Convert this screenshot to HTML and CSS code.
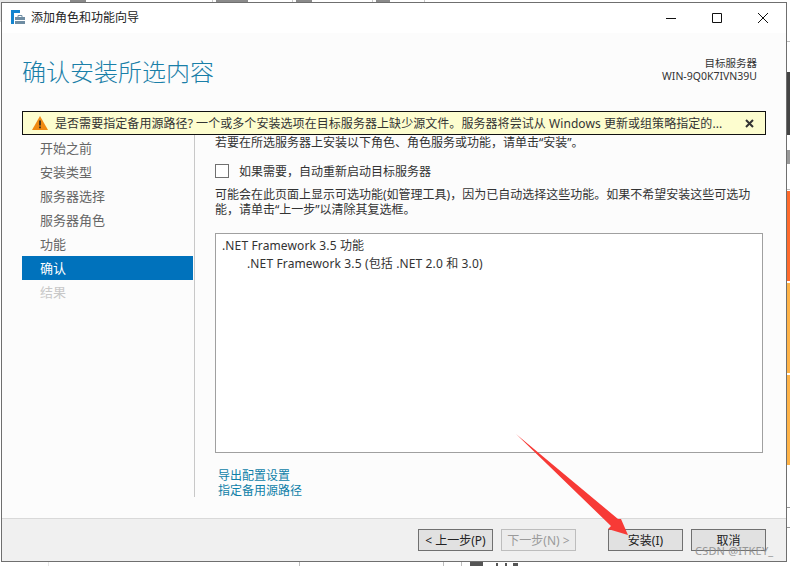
FILE: index.html
```html
<!DOCTYPE html>
<html lang="zh-CN">
<head>
<meta charset="utf-8">
<title>添加角色和功能向导</title>
<link rel="stylesheet" href="styles.css">
</head>
<body>
<svg class="desktop" width="790" height="566" viewBox="0 0 790 566">
  <path fill="#e6e6e6" d="M0 0h30v2H2v20H0z"/>
  <path fill="#c9c9c9" d="M212 0h1v2h-1zM292 0h1v2h-1zM372 0h1v2h-1zM424 0h1v2h-1z"/>
  <path fill="#8a8a8a" d="M70 0h16v2H70zM216 0h32v2h-32zM296 0h16v2h-16zM376 0h14v2h-14z"/>
  <path fill="#bdbdbd" d="M787 41h3v1h-3zM787 189h3v1h-3z"/>
  <path fill="#444" d="M787 72h3v63h-3z"/>
  <path fill="#999" d="M787 150h3v14h-3zM787 507h3v1h-3zM787 527h3v1h-3z"/>
  <path fill="#ff6a2b" d="M787 191h3v90h-3z"/>
  <path fill="#ffb347" d="M787 283h3v90h-3zM787 375h3v90h-3z"/>
  <path fill="#e6e6e6" d="M48 562h1v4h-1z"/>
  <path fill="#bdbdbd" d="M299 562h1v4h-1zM443 562h1v4h-1zM461 562h1v4h-1z"/>
  <path fill="#555" d="M470 562h13v4h-13zM496 563h2v3h-2zM505 563h2v3h-2zM513 563h5v3h-5z"/>
</svg>
<div class="window">
  <div class="titlebar">
    <svg class="appicon" width="14" height="14" viewBox="0 0 14 14"><path fill="#1384cf" d="M0 0h9v3H3v11H0z"/><path fill="#6f8da3" d="M4 7h10v7H4z"/><path fill="none" stroke="#6f8da3" d="M7 7V5.5h4V7"/><path fill="#fff" d="M4 10h10v1H4z"/></svg>
    <span class="title">添加角色和功能向导</span>
    <div class="winbtns">
      <svg width="12" height="12" viewBox="0 0 12 12"><path d="M1 6.5h10" stroke="#111" fill="none"/></svg>
      <svg width="12" height="12" viewBox="0 0 12 12"><path d="M1.5 1.5h9v9h-9z" stroke="#111" fill="none"/></svg>
      <svg width="12" height="12" viewBox="0 0 12 12"><path d="M1 1l10 10M11 1L1 11" stroke="#111" fill="none"/></svg>
    </div>
  </div>
  <div class="head">
    <h1>确认安装所选内容</h1>
    <div class="target"><div>目标服务器</div><div>WIN-9Q0K7IVN39U</div></div>
  </div>
  <div class="alert">
    <svg width="16" height="14" viewBox="0 0 16 14"><path d="M8 0l8 14H0z" fill="#f08a12"/><path d="M7.2 4.5h1.6v5H7.2zM7.2 10.5h1.6v1.7H7.2z" fill="#222"/></svg>
    <span class="alert-text">是否需要指定备用源路径? 一个或多个安装选项在目标服务器上缺少源文件。服务器将尝试从 Windows 更新或组策略指定的...</span>
    <svg class="alert-x" width="9" height="9" viewBox="0 0 9 9"><path d="M1 1l7 7M8 1L1 8" stroke="#333" stroke-width="2" fill="none"/></svg>
  </div>
  <div class="main">
    <ul class="nav">
      <li>开始之前</li>
      <li>安装类型</li>
      <li>服务器选择</li>
      <li>服务器角色</li>
      <li>功能</li>
      <li class="active">确认</li>
      <li class="disabled">结果</li>
    </ul>
    <div class="content">
      <p class="intro">若要在所选服务器上安装以下角色、角色服务或功能，请单击“安装”。</p>
      <label class="check"><span class="box"></span>如果需要，自动重新启动目标服务器</label>
      <p class="note">可能会在此页面上显示可选功能(如管理工具)，因为已自动选择这些功能。如果不希望安装这些可选功能，请单击“上一步”以清除其复选框。</p>
      <div class="list">
        <div>.NET Framework 3.5 功能</div>
        <div class="sub">.NET Framework 3.5 (包括 .NET 2.0 和 3.0)</div>
      </div>
      <div class="links"><a>导出配置设置</a><a>指定备用源路径</a></div>
    </div>
  </div>
  <div class="footer">
    <button class="btn">&lt; 上一步(P)</button>
    <button class="btn off">下一步(N) &gt;</button>
    <button class="btn install">安装(I)</button>
    <button class="btn">取消</button>
  </div>
</div>
<svg class="arrow" width="120" height="110" viewBox="0 0 120 110"><path fill="#f73a36" d="M1 1L103 86 106 86 113 102 93 96 96 93z"/></svg>
<div class="mark">CSDN @ITKEY_</div>
</body>
</html>
```
FILE: styles.css
```css
* { box-sizing: border-box; }
html, body { margin: 0; padding: 0; }
body {
  width: 790px; height: 566px; overflow: hidden; position: relative;
  background: #fff;
  font-family: "Noto Sans", "Noto Sans CJK SC", sans-serif;
  font-size: 12px; color: #333;
}
.desktop { position: absolute; left: 0; top: 0; }
.window {
  position: absolute; left: 1px; top: 2px; width: 786px; height: 560px;
  border: 1px solid #6f6f6f; background: #fcfcfc;
  display: flex; flex-direction: column;
}
.titlebar {
  height: 30px; background: #fff; display: flex; align-items: center;
  padding-left: 9px; flex: none;
}
.appicon { margin-bottom: 2px; }
.title { margin-left: 6px; font-size: 12px; color: #222; line-height: 16px; }
.winbtns { margin-left: auto; display: flex; gap: 34px; padding-right: 17px; }
.head {
  flex: none; height: 78px; padding: 23px 29px 0 20px;
  display: flex; justify-content: space-between; align-items: flex-start;
}
h1 { margin: 1px 0 0; font-size: 24px; font-weight: 300; color: #1a7fa8; line-height: 30px; }
.target { font-size: 10.5px; line-height: 13px; text-align: right; color: #333; margin-top: 1px; }
.alert {
  flex: none; margin-left: 20px; width: 744px; height: 24px;
  background: #fdfdcf; border: 1px solid #111;
  display: flex; align-items: center; padding: 0 11px 0 9px;
}
.alert-text { margin-left: 7px; white-space: nowrap; color: #333; flex: 1; letter-spacing: .06px; }
.main { flex: 1; display: flex; min-height: 0; }
.nav {
  list-style: none; margin: 0 0 21px 20px; padding: 1px 0 0; width: 172px; flex: none;
}
.nav li { height: 24px; line-height: 24px; padding-left: 18px; width: 171px; font-size: 13px; color: #666; }
.nav li.active { background: #0072bc; color: #fff; }
.nav li.disabled { color: #c8c8c8; }
.content { flex: 1; border-left: 1px solid #c8c8c8; margin-bottom: 21px; padding-left: 20px; }
.intro { margin: 1px 0 0; line-height: 14px; height: 14px; white-space: nowrap; }
.check { display: flex; align-items: center; margin-top: 13px; height: 16px; }
.box { width: 14px; height: 14px; border: 1px solid #707070; background: #fff; margin-right: 10px; }
.note { margin: 8px 0 0; width: 550px; line-height: 15px; height: 30px; }
.list {
  margin-top: 16px; width: 548px; height: 220px; background: #fff;
  border: 1px solid #a0a0a0; padding: 3px 6px; line-height: 18px; letter-spacing: .13px;
}
.sub { padding-left: 25px; }
.links { margin-top: 15px; margin-left: 3px; display: flex; flex-direction: column; line-height: 15px; color: #0f7fa8; }
.footer {
  flex: none; height: 43px; background: #f0f0f0; border-top: 1px solid #d9d9d9;
  display: flex; align-items: center;
}
.btn {
  width: 75px; height: 22px; padding: 2px 0 0; background: #e1e1e1; border: 1px solid #707070;
  font: inherit; color: #222; line-height: 18px;
}
.btn:first-child { margin-left: 416px; }
.btn.off { margin-left: 8px; background: #ececec; border-color: #bdbdbd; color: #9a9a9a; }
.btn.install { margin-left: 32px; }
.btn:last-child { margin-left: 8px; }
.arrow { position: absolute; left: 515px; top: 433px; }
.mark { position: absolute; left: 695px; top: 543px; font-size: 11px; letter-spacing: .2px; color: #8a8a8a; opacity: .85; }
```
